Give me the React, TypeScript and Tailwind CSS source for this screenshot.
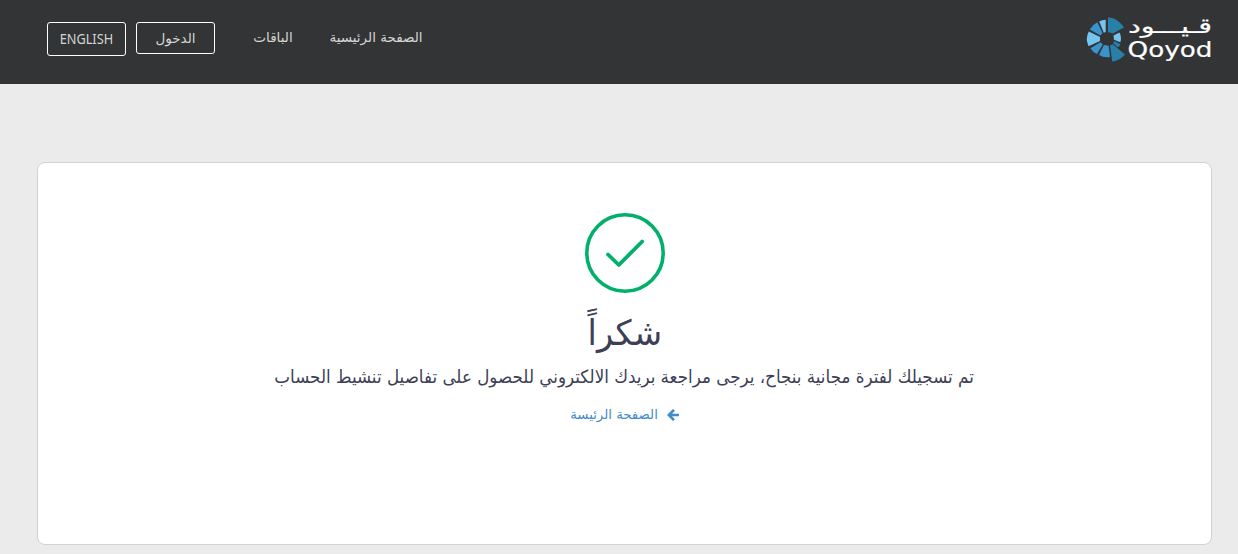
import React from "react";

function Logo() {
  return (
    <svg width="130" height="50" viewBox="0 0 130 50" direction="ltr" className="block">
      <g transform="translate(0,1)">
        <path d="M24 1.300 C31 2 36.500 6 40 11.500 L28.800 17.600 Q27 16.300 24 16.200Z" fill="#2880a8" />
        <path d="M21.700 3.700 V16 L19.800 16.700 L15.200 5.400 Q18 3.800 21.700 3.700Z" fill="#75c5f0" />
        <path d="M13.300 6.300 L18.500 17 L16.500 19.500 L5.800 13.500 Q8.500 8.700 13.300 6.300Z" fill="#3b93cc" />
        <path d="M4.800 15.500 L16 21 V25 L4.500 30.200 Q1 22.500 4.800 15.500Z" fill="#75c5f0" />
        <path d="M16.500 26.300 L18.800 28.600 L13 38 Q8.500 36 6.400 32.300Z" fill="#3b93cc" />
        <path d="M20 29 L24.700 29.700 L26 41 Q20 42 15 39Z" fill="#3b93cc" />
        <path d="M26 29.500 L28.700 28.200 L41 38.500 Q36 44.500 28.300 45.800Z" fill="#2880a8" />
        <path d="M30 25 L36.500 28.200 Q36 30.700 33.500 31.200 L29.300 27.300Z" fill="#2880a8" />
        <path d="M29.500 19.500 L35.500 16.500 Q38 21.500 36.300 26.300 L30 23.800Z" fill="#75c5f0" />
      </g>
      <text x="44" y="18" textLength="84" lengthAdjust="spacingAndGlyphs" direction="rtl" textAnchor="end" fontFamily="DejaVu Sans" fontSize="20" fill="#fff" stroke="#fff" strokeWidth=".2">قـيـــود</text>
      <text x="43.500" y="42" textLength="85" lengthAdjust="spacingAndGlyphs" fontFamily="DejaVu Sans" fontSize="22" fill="#fff" stroke="#fff" strokeWidth=".2">Qoyod</text>
    </svg>
  );
}

export default function App() {
  return (
    <div dir="rtl" className="h-[554px] w-[1238px] overflow-hidden bg-[#ebebeb] font-['DejaVu_Sans',sans-serif] text-[#3c4055]">
      <header className="flex h-[84px] items-start justify-between bg-[#333435] pt-[15px] pr-[24px] pl-[47px] text-[#d4d4d4]">
        <a href="#" aria-label="Qoyod"><Logo /></a>
        <nav className="flex items-start pt-[7px]">
          <a href="#" className="flex h-[30px] w-[94px] items-center justify-center whitespace-nowrap text-[13.5px]"><span>الصفحة الرئيسية</span></a>
          <a href="#" className="mr-[35px] flex h-[30px] w-[42px] items-center justify-center whitespace-nowrap text-[13.5px]"><span>الباقات</span></a>
          <a href="#" className="mr-[37px] flex h-[32px] w-[79px] items-center justify-center rounded-[3px] border border-white text-[13.5px]"><span>الدخول</span></a>
          <a href="#" className="mr-[10px] flex h-[34px] w-[79px] items-center justify-center rounded-[3px] border border-white pb-px font-['Noto_Sans'] text-[14px]"><span className="scale-x-[.91]">ENGLISH</span></a>
        </nav>
      </header>
      <main className="pt-[78px] pr-[26px] pl-[37px]">
        <section className="flex h-[383px] flex-col items-center rounded-lg border border-[#d2d2d2] bg-white pt-[50px]">
          <svg width="80" height="80" viewBox="0 0 80 80" fill="none" stroke="#00b06b" className="shrink-0">
            <circle cx="40" cy="40" r="38.200" strokeWidth="3.600" />
            <path d="M23 41.500 L33.800 52 L57.200 28.500" strokeWidth="3.800" strokeLinecap="round" strokeLinejoin="round" />
          </svg>
          <h1 className="mt-[12px] flex h-[56px] items-center justify-center text-[35px] whitespace-nowrap"><span className="scale-x-[.96]">شكراً</span></h1>
          <p className="mt-px flex h-[28px] items-center justify-center text-[18px] whitespace-nowrap"><span className="scale-x-[.93]">تم تسجيلك لفترة مجانية بنجاح، يرجى مراجعة بريدك الالكتروني للحصول على تفاصيل تنشيط الحساب</span></p>
          <a href="#" className="mt-[11px] flex h-[28px] items-center gap-[9px] text-[13.3px] whitespace-nowrap text-[#428bca]">
            <svg width="12" height="12" viewBox="0 0 12 12" fill="none" stroke="currentColor" strokeWidth="2.700"><path d="M7 .9 L1.900 6 L7 11.100 M2 6 H12" /></svg>
            <span>الصفحة الرئيسة</span>
          </a>
        </section>
      </main>
    </div>
  );
}
